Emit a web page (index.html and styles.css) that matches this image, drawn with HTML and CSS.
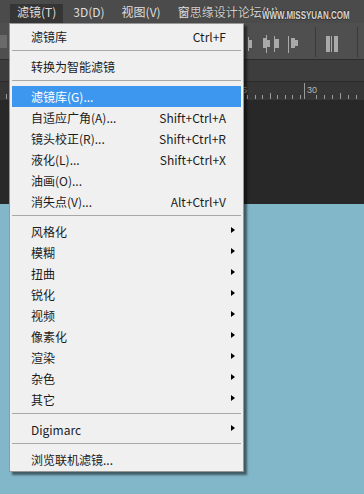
FILE: index.html
```html
<!DOCTYPE html>
<html lang="zh-CN">
<head>
    <meta charset="UTF-8">
    <meta name="viewport" content="width=device-width, initial-scale=1.0">
    <title>滤镜菜单</title>
    <link rel="stylesheet" href="styles.css">
</head>
<body>

    <div class="app">
        <!-- Top menu bar -->
        <div class="menubar">
            <span class="menubar-item active">滤镜(T)</span>
            <span class="menubar-item">3D(D)</span>
            <span class="menubar-item">视图(V)</span>
            <span class="menubar-item mark">窗<span class="mark-cn">思缘设计论坛</span>(H)<span class="mark-url">WWW.MISSYUAN.COM</span></span>
        </div>

        <!-- Options bar with align icons -->
        <div class="optionsbar">
            <span class="stub"></span>
            <svg class="align-icons" width="364" height="36" viewBox="0 0 364 36">
                <g fill="#a9a9a9">
                    <rect x="248" y="14" width="1" height="14"/>
                    <rect x="249" y="17" width="3" height="8"/>
                    <rect x="266" y="12" width="1" height="18"/>
                    <rect x="263" y="15" width="3" height="10"/>
                    <rect x="267" y="17" width="3" height="7"/>
                    <rect x="274" y="13" width="1" height="16"/>
                    <rect x="275" y="16" width="4" height="9"/>
                    <rect x="288" y="13" width="1" height="17"/>
                    <rect x="291" y="15" width="4" height="10"/>
                    <rect x="295" y="17" width="3" height="6"/>
                    <rect x="326" y="13" width="4" height="16"/>
                    <rect x="331" y="13" width="1" height="16"/>
                    <rect x="334" y="13" width="4" height="16"/>
                </g>
                <rect x="315" y="4" width="1" height="30" fill="#3a3a3a"/>
                <rect x="357" y="4" width="1" height="30" fill="#3a3a3a"/>
            </svg>
        </div>

        <div class="tabbar"></div>

        <!-- Ruler -->
        <div class="ruler">
            <svg width="364" height="18" viewBox="0 0 364 18">
                <g fill="#9a9a9a">
                    <rect x="6" y="12" width="1" height="5"/>
                    <rect x="234" y="1" width="1" height="16"/>
                    <rect x="247" y="13" width="1" height="4"/>
                    <rect x="255" y="13" width="1" height="4"/>
                    <rect x="262" y="13" width="1" height="4"/>
                    <rect x="270" y="11" width="1" height="6"/>
                    <rect x="277" y="13" width="1" height="4"/>
                    <rect x="285" y="13" width="1" height="4"/>
                    <rect x="292" y="13" width="1" height="4"/>
                    <rect x="300" y="13" width="1" height="4"/>
                    <rect x="304" y="1" width="1" height="16"/>
                    <rect x="316" y="13" width="1" height="4"/>
                    <rect x="324" y="13" width="1" height="4"/>
                    <rect x="332" y="13" width="1" height="4"/>
                    <rect x="340" y="11" width="1" height="6"/>
                    <rect x="348" y="13" width="1" height="4"/>
                    <rect x="356" y="13" width="1" height="4"/>
                </g>
                <text x="237" y="11" class="ruler-num">25</text>
                <text x="307" y="11" class="ruler-num">30</text>
            </svg>
        </div>

        <div class="canvas"></div>

        <!-- Filter dropdown -->
        <div class="dropdown">
            <div class="item"><span>滤镜库</span><span>Ctrl+F</span></div>
            <div class="sep"></div>
            <div class="item"><span>转换为智能滤镜</span></div>
            <div class="sep"></div>
            <div class="item hover"><span>滤镜库(G)...</span></div>
            <div class="item"><span>自适应广角(A)...</span><span>Shift+Ctrl+A</span></div>
            <div class="item"><span>镜头校正(R)...</span><span>Shift+Ctrl+R</span></div>
            <div class="item"><span>液化(L)...</span><span>Shift+Ctrl+X</span></div>
            <div class="item"><span>油画(O)...</span></div>
            <div class="item"><span>消失点(V)...</span><span>Alt+Ctrl+V</span></div>
            <div class="sep"></div>
            <div class="item"><span>风格化</span><span></span><i class="arrow"></i></div>
            <div class="item"><span>模糊</span><span></span><i class="arrow"></i></div>
            <div class="item"><span>扭曲</span><span></span><i class="arrow"></i></div>
            <div class="item"><span>锐化</span><span></span><i class="arrow"></i></div>
            <div class="item"><span>视频</span><span></span><i class="arrow"></i></div>
            <div class="item"><span>像素化</span><span></span><i class="arrow"></i></div>
            <div class="item"><span>渲染</span><span></span><i class="arrow"></i></div>
            <div class="item"><span>杂色</span><span></span><i class="arrow"></i></div>
            <div class="item"><span>其它</span><span></span><i class="arrow"></i></div>
            <div class="sep"></div>
            <div class="item"><span>Digimarc</span><span></span><i class="arrow"></i></div>
            <div class="sep"></div>
            <div class="item"><span>浏览联机滤镜...</span></div>
        </div>
    </div>

</body>
</html>
```

FILE: styles.css
```css
body {
    margin: 0;
    background-color: #82b6c9;
    font-family: "Noto Sans CJK SC", sans-serif;
    font-size: 12px;
}

.app {
    position: relative;
    width: 364px;
    height: 494px;
    overflow: hidden;
}

/* Menu bar */
.menubar {
    display: flex;
    gap: 3px;
    height: 23px;
    padding-left: 10px;
    background-color: #4b4b4b;
    color: #dedede;
    white-space: nowrap;
}

.menubar-item {
    display: flex;
    align-items: center;
    margin-top: 4px;
    padding: 0 7px 3px;
    line-height: 16px;
}

.menubar-item.active {
    background-color: #353535;
}

.mark {
    position: relative;
}

.mark-cn {
    color: #cfcfcf;
    text-shadow: 0 0 1px #222;
}

.mark-url {
    position: absolute;
    left: 91px;
    top: 4px;
    font-family: "Liberation Sans", sans-serif;
    font-size: 10px;
    font-weight: bold;
    color: #d4d4d4;
    text-shadow: 1px 0 0 #333, -1px 0 0 #333, 0 1px 0 #333, 0 -1px 0 #333;
    transform: scaleX(0.8);
    transform-origin: left center;
}

/* Options bar */
.optionsbar {
    display: flex;
    height: 36px;
    background-color: #4f4f4f;
    border-bottom: 1px solid #2c2c2c;
}

.stub {
    width: 7px;
    height: 13px;
    margin-top: 12px;
    margin-right: -7px;
    background-color: #6a6a6a;
}

.tabbar {
    height: 21px;
    background-color: #3d3d3d;
    border-bottom: 1px solid #2a2a2a;
}

.ruler {
    height: 18px;
    background-color: #363636;
}

.ruler svg {
    display: block;
}

.ruler-num {
    font-family: "Liberation Sans", sans-serif;
    font-size: 9px;
    fill: #b4b4b4;
}

.canvas {
    height: 104px;
    background-color: #282828;
}

/* Dropdown menu */
.dropdown {
    position: absolute;
    left: 9px;
    top: 23px;
    width: 229px;
    padding: 2px 2px 1px;
    background-color: #f0f0f0;
    border: 1px solid #979797;
    box-shadow: 3px 3px 2px rgba(0, 0, 0, 0.5);
    color: #1b1b1b;
}

.item {
    display: grid;
    grid-template-columns: 1fr auto 15px;
    align-items: center;
    height: 21px;
    padding-left: 19px;
    white-space: nowrap;
}

.item.hover {
    background-color: #3d97ee;
    color: #fff;
}

.sep {
    height: 1px;
    margin: 3px 0 5px;
    background-color: #a8a8a8;
}

.arrow {
    justify-self: start;
    width: 0;
    height: 0;
    margin-left: 5px;
    margin-top: -3px;
    border-left: 4px solid #000;
    border-top: 3.5px solid transparent;
    border-bottom: 3.5px solid transparent;
}
```
